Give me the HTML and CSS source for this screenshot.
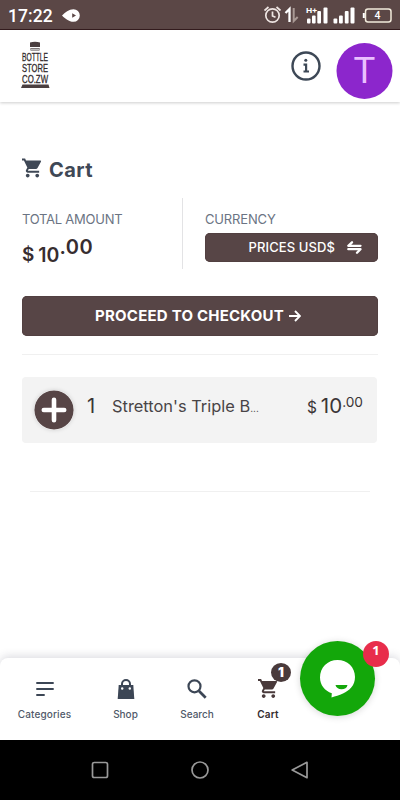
FILE: index.html
```html
<!DOCTYPE html>
<html lang="en">
<head>
<meta charset="utf-8">
<title>Cart</title>
<link rel="stylesheet" href="styles.css">
</head>
<body>
<svg width="0" height="0" class="defs" aria-hidden="true">
  <symbol id="cart" viewBox="1 2 21 20"><path d="M7 18c-1.100 0-1.990.9-1.990 2S5.900 22 7 22s2-.9 2-2-.9-2-2-2zM1 2v2h2l3.600 7.590-1.350 2.450c-.16.280-.25.610-.25.960 0 1.100.9 2 2 2h12v-2H7.420c-.14 0-.25-.11-.25-.25l.03-.12.900-1.630h7.450c.75 0 1.410-.41 1.750-1.030l3.580-6.490A1 1 0 0 0 20 4H5.210l-.94-2H1zm16 16c-1.100 0-1.990.9-1.990 2s.89 2 1.990 2 2-.9 2-2-.9-2-2-2z"/></symbol>
</svg>
<div class="screen">
  <div class="status">
    <span class="clock">17:22</span>
    <svg class="notif" width="19" height="13" viewBox="0 0 19 13"><path fill="#fff" fill-rule="evenodd" d="M0 6.500C3 3.500 7 .2 11.500.2a6.300 6.300 0 0 1 0 12.600C7 12.800 3 9.500 0 6.500zM10.200 4.300v4.400l3.800-2.200z"/></svg>
    <svg class="indicators" width="130" height="20" viewBox="0 0 130 20">
      <g fill="none" stroke="#eee5e2" stroke-width="1.700"><circle cx="8.500" cy="10.500" r="6.700"/><path d="M8.500 6.500v4.500l3 1.300M.5 5.500l4-3.500M16.500 5.500l-4-3.500"/></g>
      <path d="M25.500 17V4l-4 4" fill="none" stroke="#fff" stroke-width="2.300"/>
      <path d="M29.700 3v13l4-4" fill="none" stroke="#a99994" stroke-width="2"/>
      <text class="hplus" x="42" y="8" textLength="11" lengthAdjust="spacingAndGlyphs">H+</text>
      <g fill="#fff"><rect x="43" y="13.500" width="3.500" height="5" rx="1"/><rect x="48" y="10.500" width="3.600" height="8" rx="1"/><rect x="53.300" y="6" width="3.700" height="12.500" rx="1"/><rect x="59.500" y="2.500" width="4" height="16" rx="1"/>
      <rect x="69.500" y="13.500" width="3.800" height="5" rx="1"/><rect x="75" y="10.500" width="3.800" height="8" rx="1"/><rect x="80.800" y="6" width="3.800" height="12.500" rx="1"/><rect x="86.500" y="2.500" width="4" height="16" rx="1"/></g>
      <rect x="101.500" y="4" width="25.500" height="13" rx="2.500" fill="none" stroke="#f2ebdc" stroke-width="1.500"/><rect x="98.800" y="8" width="2" height="5" fill="#fff"/>
      <text class="level" x="113.500" y="14.300" text-anchor="middle">4</text>
    </svg>
  </div>

  <header class="header">
    <svg class="logo" width="29" height="47" viewBox="0 0 29 47">
      <path fill="#4a3f40" d="M9 1.500Q14 0 19 1.500V6H9zM9.500 7h9v2.500h-9zM1.500 43.500h26l1 3.500H0z"/>
      <path d="M9.800 8.300h8.400" stroke="#bbb" stroke-width="1.500"/>
      <g class="logo-text"><text x="1" y="20" textLength="26" lengthAdjust="spacingAndGlyphs">BOTTLE</text><text x="1" y="31" textLength="26" lengthAdjust="spacingAndGlyphs">STORE</text><text x="1" y="42" textLength="26" lengthAdjust="spacingAndGlyphs">CO.ZW</text></g>
    </svg>
    <svg class="info" width="30" height="30" viewBox="0 0 30 30"><circle cx="15" cy="15" r="13.500" fill="none" stroke="#3d4856" stroke-width="2.400"/><circle cx="14.800" cy="9.300" r="1.500" fill="#3d4856"/><path d="M12.500 13.700h2.600v6.800M12.500 20.500h5.500" fill="none" stroke="#3d4856" stroke-width="2.200"/></svg>
    <div class="avatar">T</div>
  </header>

  <main class="main">
    <h1 class="title"><svg width="20" height="20"><use href="#cart"/></svg><span>Cart</span></h1>
    <section class="summary">
      <div class="total">
        <div class="label label-total">TOTAL AMOUNT</div>
        <div class="amount"><span class="cur">$</span><span class="units">10</span><span class="cents">.00</span></div>
      </div>
      <div class="currency">
        <div class="label label-currency">CURRENCY</div>
        <button class="switch"><span>PRICES USD$</span><svg width="15" height="13" viewBox="0 0 15 13"><path fill="none" stroke="#fff" stroke-width="2.300" stroke-linejoin="round" stroke-linecap="round" d="M5 1.300 1.300 4.800H13.500M1.300 8.200h12.200L10 11.700"/></svg></button>
      </div>
    </section>
    <button class="checkout"><span>PROCEED TO CHECKOUT</span><svg width="12" height="12" viewBox="0 0 12 12"><path fill="none" stroke="#fff" stroke-width="1.900" d="M0 6h10.500M6 1l5 5-5 5"/></svg></button>
    <div class="rule"></div>
    <article class="item">
      <svg class="plus" width="40" height="40" viewBox="0 0 40 40"><circle cx="20" cy="20" r="19.600" fill="#574546"/><path d="M20 9.800v20.400M9.800 20h20.400" stroke="#fff" stroke-width="4.600" stroke-linecap="round"/></svg>
      <span class="qty">1</span>
      <span class="name">Stretton's Triple B<small>...</small></span>
      <span class="price"><span class="price-cur">$</span><span>10</span><span class="price-cents">.00</span></span>
    </article>
    <div class="rule rule-short"></div>
  </main>

  <nav class="tabs">
    <a class="tab categories"><svg width="24" height="24" viewBox="0 0 24 24"><path stroke="#3c4655" stroke-width="1.900" stroke-linecap="round" d="M4 6h16M4 12h16M4 18h7"/></svg><span>Categories</span></a>
    <a class="tab shop"><svg width="24" height="24" viewBox="0 0 24 24"><path d="M8 9V7a4 4 0 0 1 8 0V9" fill="none" stroke="#3c4655" stroke-width="2"/><path d="M4.700 8h14.600l1 14H3.700z" fill="#3c4655"/><g fill="#fff"><circle cx="8.200" cy="11.500" r="1.200"/><circle cx="15.800" cy="11.500" r="1.200"/></g></svg><span>Shop</span></a>
    <a class="tab search"><svg width="24" height="24" viewBox="0 0 24 24"><circle cx="9.500" cy="9.300" r="6" fill="none" stroke="#3c4655" stroke-width="2.200"/><path d="m14 14 6.700 6.700" stroke="#3c4655" stroke-width="2.700"/></svg><span>Search</span></a>
    <a class="tab active"><svg width="24" height="24" viewBox="0 0 24 24"><use href="#cart" x="2" y="1" width="20" height="21"/></svg><span>Cart</span><b class="count">1</b></a>
    <div class="chat"><svg width="75" height="75" viewBox="0 0 75 75"><path fill="#fff" d="M37.500 19c10 0 17.500 7.300 17.500 17 0 8.500-5.500 13.500-12 16.500-4 1.800-7.500 2.700-11.500 4l.3-4.300C24.800 50 20 44 20 36.500 20 26.500 27.500 19 37.500 19z"/><path fill="#13a70a" d="M35.500 44h12c-.5 3-2.800 4.300-6 4.300S36 46.500 35.500 44z"/></svg><b class="unread">1</b></div>
  </nav>
  <div class="system">
    <svg width="18" height="18" viewBox="0 0 18 18"><rect x="1.500" y="1.500" width="15" height="15" rx="1.800"/></svg>
    <svg width="18" height="18" viewBox="0 0 18 18"><circle cx="9" cy="9" r="8"/></svg>
    <svg width="18" height="18" viewBox="0 0 18 18"><path d="M16 1.300v15.400L1.200 9z"/></svg>
  </div>
</div>
</body>
</html>
```
FILE: styles.css
```css
* { box-sizing: border-box; }
body { margin: 0; background: #fff; font-family: Inter, "Liberation Sans", sans-serif; color: #3f4856; }
svg { display: block; flex: none; }
button { border: 0; margin: 0; padding: 0; font: inherit; color: #fff; background: #574546; }
.defs { position: absolute; }
.screen { width: 400px; height: 800px; display: flex; flex-direction: column; overflow: hidden; }

.status { height: 30px; flex: none; display: flex; align-items: center; background: #5b4746; border-bottom: 1px solid #351c1e; padding: 0 6px 0 8px; }
.clock { font: 500 17.5px/30px Roboto, sans-serif; color: #fff; width: 54px; letter-spacing: 0.1px; padding-top: 2px; }
.notif { margin-top: 1px; }
.indicators { margin: 0 0 0 auto; }
.hplus { font: bold 8px Roboto, sans-serif; fill: #fff; }
.level { font: 500 10.5px Roboto, sans-serif; fill: #fff; }

.header { height: 72px; flex: none; display: flex; padding: 0 8px 0 21px; background: #fff; box-shadow: 0 1px 3px rgba(0,0,0,.2); }
.logo { margin-top: 11px; overflow: visible; }
.logo-text { font: 400 11.5px "Liberation Sans", sans-serif; fill: #2f292b; stroke: #2f292b; stroke-width: .3px; }
.info { margin: 21px 0 0 auto; }
.avatar { width: 56px; height: 56px; margin: 13px 0 0 15px; border-radius: 50%; background: #8c26cc; color: #eabfff; font: 400 36.5px/56px Roboto, sans-serif; text-align: center; transform: translateX(.5px); }

.main { flex: 1; padding: 54px 22px 0; }
.title { display: flex; align-items: flex-start; gap: 7px; margin: 0; height: 42px; font-size: 20px; line-height: 28px; font-weight: 700; letter-spacing: .4px; color: #3f4856; }
.title svg { fill: #3f4856; margin-top: 2px; }
.summary { display: flex; height: 71px; }
.total { width: 161px; border-right: 1px solid #e3e3e5; padding-top: 13px; }
.currency { flex: 1; padding: 13px 0 0 22px; }
.label { height: 22px; font-size: 13px; line-height: 17px; letter-spacing: -.25px; color: #6b7483; white-space: nowrap; }
.label-currency { letter-spacing: -.15px; }
.amount { display: flex; font-size: 20px; font-weight: 600; line-height: 24px; color: #372d30; padding-top: 10px; }
.cur { font-size: 19px; margin-right: 4px; }
.units { font-size: 19.5px; }
.cents { margin-top: -8px; letter-spacing: .5px; }
.switch { display: flex; align-items: center; justify-content: flex-end; gap: 12px; width: 173px; height: 29px; border-radius: 5px; padding-right: 16px; font-size: 13px; font-weight: 500; box-shadow: inset 0 0 0 1px #524041; }
.switch span { letter-spacing: .1px; margin-top: -2px; }
.checkout { display: flex; align-items: center; justify-content: center; gap: 5px; width: 356px; height: 40px; margin-top: 27px; border-radius: 5px; font-size: 15px; font-weight: 700; padding-right: 4px; box-shadow: inset 0 0 0 1px #524041; }
.checkout span { letter-spacing: .22px; margin-top: -1px; }
.rule { height: 1px; margin-top: 18px; background: #f0f0f0; }
.item { display: flex; height: 66px; width: 355px; margin-top: 22px; padding: 0 14px 0 12px; border-radius: 4px; background: #f3f3f3; color: #3b3536; }
.plus { margin-top: 13px; border-radius: 50%; box-shadow: 0 0 4px rgba(0,0,0,.14); }
.qty { font-size: 20px; line-height: 24px; margin-top: 17px; width: 38px; padding-left: 13px; }
.name { font-size: 16.4px; line-height: 24px; margin-top: 17px; white-space: nowrap; color: #484446; }
.name small { font-size: 10px; }
.price { display: flex; margin: 17px 0 0 auto; font-size: 20.5px; line-height: 24px; }
.price-cur { font-size: 15.5px; margin: 2px 4px 0 0; }
.price-cents { font-size: 13.7px; margin-top: -4px; }
.rule-short { margin: 48px 8px 0; }

.tabs { position: relative; height: 82px; flex: none; display: flex; background: #fff; border-radius: 8px 8px 0 0; box-shadow: 0 -2px 8px rgba(50,50,80,.17); padding-left: 9px; }
.tab { position: relative; display: flex; flex-direction: column; align-items: center; width: 71px; padding-top: 19px; font-size: 10px; font-weight: 500; line-height: 12px; color: #505969; gap: 7px; }
.categories span { letter-spacing: .12px; }
.shop { width: 91px; }
.search { width: 52px; }
.active { width: 90px; color: #342c2e; font-weight: 600; letter-spacing: .2px; }
.active svg { fill: #493a3b; }
.count { position: absolute; left: 48px; top: 5px; width: 20px; height: 19px; border-radius: 50%; background: #493a3b; color: #fff; font-size: 13px; line-height: 18px; text-align: center; }
.chat { position: absolute; left: 300px; top: -17px; width: 75px; height: 75px; border-radius: 50%; background: #13a70a; box-shadow: 0 1px 7px rgba(0,0,0,.16); }
.unread { position: absolute; left: 63px; top: 0; width: 26px; height: 26px; border-radius: 50%; background: #e82d4b; color: #fff; font: bold 13px/19px "Open Sans", sans-serif; text-align: center; }
.system { height: 60px; flex: none; position: relative; display: flex; align-items: center; justify-content: center; gap: 82px; background: #000; }
.system svg { fill: none; stroke: #999; stroke-width: 1.7; stroke-linejoin: round; }
```
